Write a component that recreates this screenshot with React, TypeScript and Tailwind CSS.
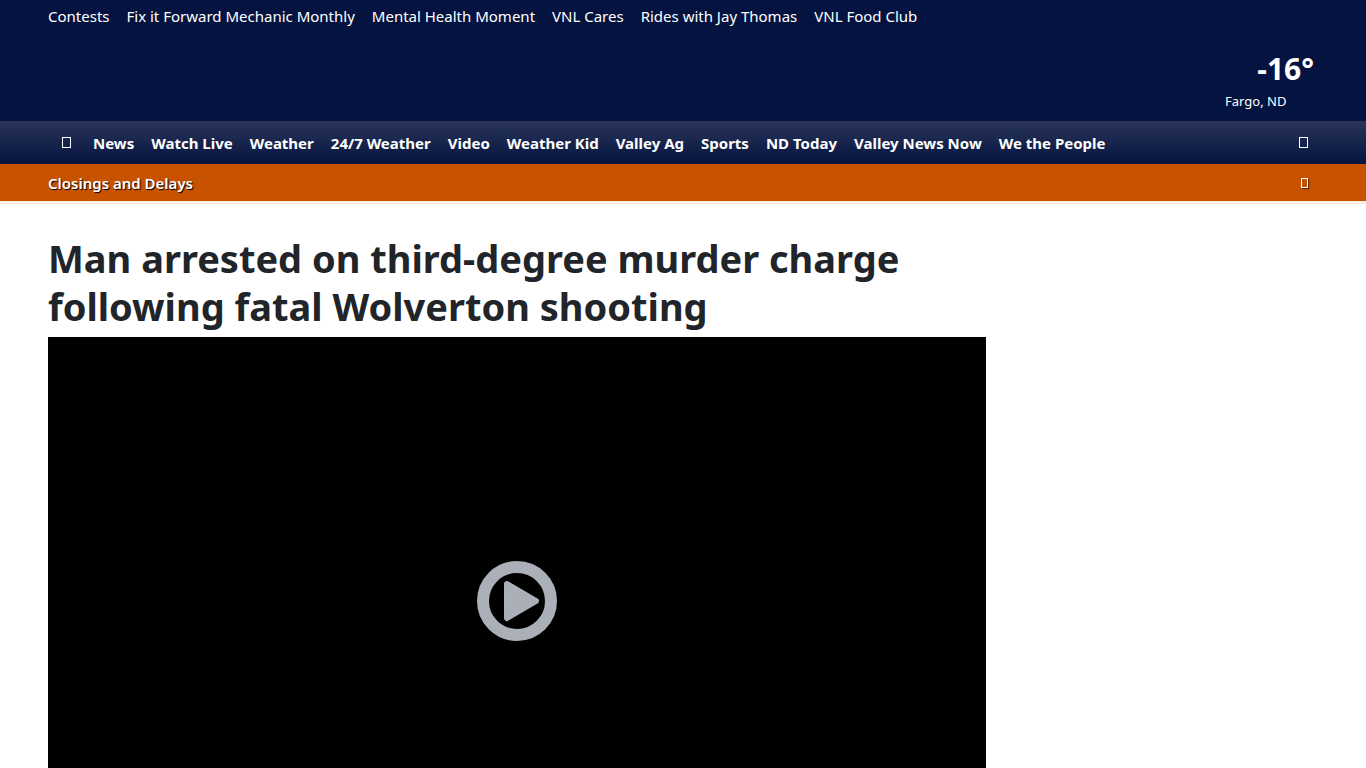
import React from "react";

interface NavLinkProps {
    label: string
}

const topLinks = [
    "Contests",
    "Fix it Forward Mechanic Monthly",
    "Mental Health Moment",
    "VNL Cares",
    "Rides with Jay Thomas",
    "VNL Food Club"
]

const mainLinks = [
    "News",
    "Watch Live",
    "Weather",
    "24/7 Weather",
    "Video",
    "Weather Kid",
    "Valley Ag",
    "Sports",
    "ND Today",
    "Valley News Now",
    "We the People"
]

const NavLink: React.FC<NavLinkProps> = ({label}) => {
    return (
        <li>
            <a href="#" className="whitespace-nowrap hover:underline">{label}</a>
        </li>
    )
}

const TopBar: React.FC = () => {
    return (
        <div className="bg-[#051340] px-12 pt-1 pb-[10px] text-white">
            <nav aria-label="Promotions">
                <ul className="flex gap-[17px] text-[15px] leading-6">
                    {topLinks.map((label) => <NavLink key={label} label={label}/>)}
                </ul>
            </nav>

            <a href="#" className="ml-auto mt-[19px] flex w-[93px] flex-col">
                <span className="self-end pr-1 text-[30px] font-bold leading-11">-16°</span>
                <span className="text-[13px] leading-5">Fargo, ND</span>
            </a>
        </div>
    )
}

const MainNav: React.FC = () => {
    return (
        <nav aria-label="Main"
             className="flex h-[43px] items-center bg-linear-to-b from-[#2a3558] to-[#051340] px-12 text-white">
            <a href="#" aria-label="Home" className="ml-3.5 mr-5.5">
                <span className="block h-[11px] w-[9px] border border-white"/>
            </a>
            <ul className="flex flex-1 gap-[17px] text-[15px] font-bold leading-6">
                {mainLinks.map((label) => <NavLink key={label} label={label}/>)}
            </ul>
            <button type="button" aria-label="Search" className="mr-2.5 cursor-pointer">
                <span className="block h-[11px] w-[9px] border border-white"/>
            </button>
        </nav>
    )
}

const AlertBar: React.FC = () => {
    return (
        <div className="flex h-[37px] items-center justify-between bg-[#c75300] px-12 text-white shadow-[0_3px_1px_#f9efe4]">
            <a href="#" className="text-[15px] font-semibold leading-6 [text-shadow:1px_1px_1px_#000]">
                Closings and Delays
            </a>
            <button type="button" aria-label="Close" className="mr-2.5 cursor-pointer">
                <span className="block h-[10px] w-[7px] border border-white shadow-[1px_1px_1px_#00000080]"/>
            </button>
        </div>
    )
}

const VideoPlayer: React.FC = () => {
    return (
        <div className="flex aspect-video items-center justify-center bg-black">
            <button type="button" aria-label="Play video" className="cursor-pointer">
                <svg viewBox="0 0 80 80" className="size-20" aria-hidden="true">
                    <circle cx="40" cy="40" r="34" fill="none" stroke="#abafb7" strokeWidth="12"/>
                    <path d="M30 23 L59 40 L30 57 Z"
                          fill="#abafb7"
                          stroke="#abafb7"
                          strokeWidth="6"
                          strokeLinejoin="round"/>
                </svg>
            </button>
        </div>
    )
}

export default function App() {
    return (
        <div className="min-h-screen bg-white font-['Noto_Sans','Open_Sans',sans-serif]">
            <header>
                <TopBar/>
                <MainNav/>
                <AlertBar/>
            </header>

            <div className="flex gap-8 px-12 pt-[33px]">
                <main className="flex-1">
                    <h1 className="mb-[7px] text-[38px] font-bold leading-12 text-[#212529]">
                        Man arrested on third-degree murder charge following fatal Wolverton shooting
                    </h1>
                    <VideoPlayer/>
                </main>
                <aside className="w-[300px]"/>
            </div>
        </div>
    )
}
